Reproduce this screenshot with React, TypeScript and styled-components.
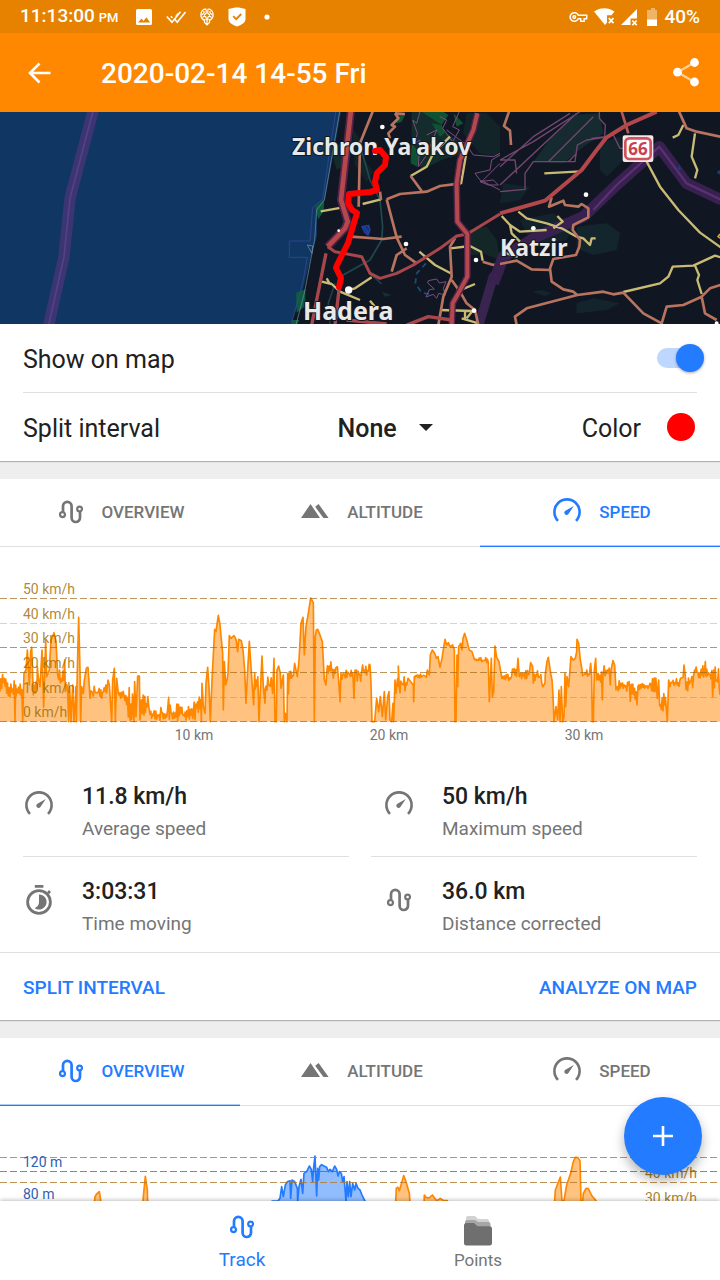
import React from "react";
import styled, { createGlobalStyle, css } from "styled-components";

const color = {
  orange: "#ff8800",
  orangeDark: "#e68200",
  blue: "#237bff",
  text: "#212121",
  muted: "#757575",
  line: "#e0e0e0",
  page: "#eeeeee",
};

const GlobalStyle = createGlobalStyle`
  *, *::before, *::after { box-sizing: border-box; }
  html, body, #root { height: 100%; }
  body {
    margin: 0;
    background: ${color.page};
    color: ${color.text};
    font-family: Roboto, "Liberation Sans", sans-serif;
  }
  button, select, input { font: inherit; color: inherit; }
  svg { display: block; flex: none; }
`;

/* ---------- layout ---------- */

const Screen = styled.div`
  display: flex;
  flex-direction: column;
  height: 100vh;
  background: ${color.page};
`;

const StatusBar = styled.div`
  display: flex;
  justify-content: space-between;
  align-items: center;
  flex: none;
  height: 33px;
  padding: 1px 20px 0 20px;
  background: ${color.orangeDark};
  color: #fff;
  font-size: 19px;
  font-weight: 500;
  line-height: 32px;
`;

const StatusGroup = styled.div<{ $gap: number }>`
  display: flex;
  align-items: center;
  gap: ${(p) => p.$gap}px;
`;

const Clock = styled.time`
  margin-right: 4px;
`;

const Meridiem = styled.span`
  margin-left: 4px;
  font-size: 13px;
`;

const AppBar = styled.header`
  display: flex;
  align-items: center;
  flex: none;
  height: 79px;
  padding: 0 20px 0 27px;
  background: ${color.orange};
  color: #fff;
`;

const IconButton = styled.button`
  display: flex;
  padding: 0;
  border: 0;
  background: none;
  cursor: pointer;
`;

const Title = styled.h1`
  flex: 1;
  margin: 0 0 0 50px;
  padding-top: 2px;
  font-size: 28px;
  font-weight: 500;
  line-height: 34px;
`;

const Body = styled.div`
  position: relative;
  flex: 1;
  min-height: 0;
  display: flex;
  flex-direction: column;
`;

const Scroll = styled.main`
  flex: 1;
  min-height: 0;
  display: flex;
  flex-direction: column;
  overflow-y: auto;
  scrollbar-width: none;
`;

const MapArt = styled.svg`
  width: 100%;
  height: 212px;
`;

const Card = styled.section`
  flex: none;
  margin-bottom: 18px;
  background: #fff;
  box-shadow: 0 1px 1px rgba(0, 0, 0, 0.25);
`;

/* ---------- settings ---------- */

const SettingRow = styled.div`
  display: grid;
  grid-template-columns: 7fr 8fr;
  align-items: center;
  height: 68px;
  margin: 0 23px;
  font-size: 25px;
  line-height: 30px;
  & + & {
    height: 69px;
    border-top: 1px solid ${color.line};
  }
`;

const SettingLabel = styled.label`
  padding-top: 3px;
`;

const Spread = styled.div<{ $end?: boolean }>`
  display: flex;
  align-items: center;
  justify-content: ${(p) => (p.$end ? "flex-end" : "space-between")};
`;

const Toggle = styled.input`
  appearance: none;
  display: grid;
  align-items: center;
  width: 47px;
  height: 28px;
  margin: 0 -7px 0 0;
  cursor: pointer;
  &::before {
    content: "";
    grid-area: 1 / 1;
    width: 40px;
    height: 20px;
    border-radius: 10px;
    background: #cccccc;
  }
  &::after {
    content: "";
    grid-area: 1 / 1;
    justify-self: start;
    width: 28px;
    height: 28px;
    border-radius: 50%;
    background: #fafafa;
    box-shadow: 0 1px 3px rgba(0, 0, 0, 0.35);
  }
  &:checked::before { background: #bdd7ff; }
  &:checked::after { justify-self: end; background: ${color.blue}; }
`;

const SelectBox = styled.div`
  display: grid;
  align-items: center;
`;

const Select = styled.select`
  grid-area: 1 / 1;
  appearance: none;
  padding: 3px 35px 0 0;
  border: 0;
  background: none;
  font-weight: 500;
`;

const Caret = styled.svg`
  grid-area: 1 / 1;
  justify-self: end;
  pointer-events: none;
`;

const ColorField = styled.div`
  display: flex;
  align-items: center;
  gap: 26px;
  margin-right: 2px;
`;

const Swatch = styled.button`
  width: 28px;
  height: 28px;
  padding: 0;
  border: 0;
  border-radius: 50%;
  background: #ff0000;
  cursor: pointer;
`;

/* ---------- tabs, chart, stats ---------- */

const Tabs = styled.div`
  display: grid;
  grid-template-columns: repeat(3, 1fr);
  height: 68px;
`;

const Tab = styled.button<{ $active: boolean }>`
  display: flex;
  align-items: center;
  justify-content: center;
  gap: 18px;
  padding: 0 0 2px 4px;
  border: 0;
  border-bottom: 1px solid ${color.line};
  background: none;
  color: ${color.muted};
  font-size: 17px;
  font-weight: 500;
  line-height: 20px;
  cursor: pointer;
  ${(p) =>
    p.$active &&
    css`
      color: ${color.blue};
      border-color: ${color.blue};
      box-shadow: inset 0 -1px 0 #a9ccf8;
    `}
`;

const ChartArt = styled.svg`
  width: 100%;
  height: auto;
  font-size: 14px;
`;

const Stats = styled.div`
  display: grid;
  grid-template-columns: 1fr 1fr;
  border-bottom: 1px solid ${color.line};
`;

const StatCell = styled.div`
  &:nth-child(-n + 2)::after {
    content: "";
    display: block;
    height: 1px;
    margin: -1px 11px 0 23px;
    background: ${color.line};
  }
  &:nth-child(2)::after { margin: -1px 23px 0 11px; }
`;

const Stat = styled.div`
  display: grid;
  grid-template-columns: 32px 1fr;
  column-gap: 27px;
  align-items: center;
  height: 95px;
  margin-left: 23px;
`;

const StatIcon = styled.div`
  display: flex;
  justify-content: center;
  padding-bottom: 10px;
  color: ${color.muted};
`;

const StatText = styled.div`
  padding-top: 7px;
`;

const StatValue = styled.div`
  font-size: 23px;
  font-weight: 500;
  line-height: 32px;
`;

const StatLabel = styled.div`
  color: ${color.muted};
  font-size: 19px;
  line-height: 32px;
`;

const Actions = styled.div`
  display: flex;
  justify-content: space-between;
  align-items: center;
  height: 67px;
  padding: 0 23px;
`;

const TextButton = styled.button`
  padding: 2px 0 0;
  border: 0;
  background: none;
  color: ${color.blue};
  font-size: 19px;
  font-weight: 500;
  line-height: 24px;
  cursor: pointer;
`;

const Fab = styled.button`
  position: absolute;
  right: 18px;
  bottom: 26px;
  display: grid;
  place-items: center;
  width: 78px;
  height: 78px;
  padding: 0;
  border: 0;
  border-radius: 50%;
  background: ${color.blue};
  box-shadow: 0 6px 12px rgba(0, 0, 0, 0.3);
  cursor: pointer;
`;

const BottomNav = styled.nav`
  position: relative;
  display: flex;
  justify-content: center;
  flex: none;
  height: 79px;
  background: #fff;
  box-shadow: 0 -1px 4px rgba(0, 0, 0, 0.25);
`;

const NavItem = styled.a<{ $active?: boolean }>`
  display: flex;
  flex-direction: column;
  align-items: center;
  justify-content: space-between;
  width: 236px;
  padding: 14px 0 8px;
  color: ${(p) => (p.$active ? color.blue : color.muted)};
  font-size: ${(p) => (p.$active ? 19 : 17)}px;
  line-height: 24px;
  text-decoration: none;
`;

/* ---------- icons ---------- */

const RouteIcon = () => (
  <svg width="24" height="24" viewBox="0 0 24 24" fill="none" stroke="currentColor">
    <path d="M4 12.2V6.200a4.300 4.300 0 0 1 8.600 0v11.600a4.200 4.200 0 0 0 8.400 0v-6.200" strokeWidth="2.700" />
    <circle cx="3.500" cy="14.600" r="2.500" strokeWidth="2.200" />
    <circle cx="20.600" cy="9" r="2.400" strokeWidth="2.200" />
  </svg>
);

const MountainIcon = () => (
  <svg width="28" height="20" viewBox="0 0 28 20" fill="currentColor">
    <path d="M0 16 9.5 2 19 16zM14.2 4.8 17.6 2 27.6 16h-5.2z" />
  </svg>
);

const GaugeIcon = () => (
  <svg width="28" height="28" viewBox="0 0 28 28">
    <path d="M5 22.8A12.6 12.6 0 1 1 23 22.8" fill="none" stroke="currentColor" strokeWidth="2.6" />
    <path d="M20.8 8 15.6 15.8a2.3 2.3 0 1 1-3.2-3.1z" fill="currentColor" />
  </svg>
);

const TimerIcon = () => (
  <svg width="28" height="32" viewBox="0 0 28 32">
    <path d="M9.8 1h8.6v2.8H9.8zM22 8.2l2-2.2 2 2-2 2.2z" fill="currentColor" />
    <circle cx="14" cy="18" r="11.4" fill="none" stroke="currentColor" strokeWidth="2.8" />
    <path d="M14 10.4a7.6 7.6 0 1 1-4.4 13.8q4.4-2 4.4-6.200z" fill="currentColor" />
  </svg>
);

const FoldersIcon = () => (
  <svg width="28" height="31" viewBox="0 0 28 31">
    <path d="M2 3a2 2 0 0 1 2-2h7l3 3h9a2 2 0 0 1 2 2v6H2z" fill="#d2d2d2" />
    <path d="M1 7a2 2 0 0 1 2-2h8l3 2h10.500a2 2 0 0 1 2 2v6H1z" fill="#a6a6a6" />
    <path d="M0 10.500a2.500 2.500 0 0 1 2.500-2.500h7.500l3.500 3.200h12a2.500 2.500 0 0 1 2.500 2.500V28a2.500 2.500 0 0 1-2.500 2.500h-23A2.500 2.500 0 0 1 0 28z" fill="#6f6f6f" />
  </svg>
);

const BackIcon = () => (
  <svg width="24" height="24" viewBox="0 0 24 24" fill="none" stroke="#fff" strokeWidth="2.6">
    <path d="M23.500 12H2.500M12.500 2.500 3 12 12.500 21.500" />
  </svg>
);

const ShareIcon = () => (
  <svg width="28" height="30" viewBox="0 0 28 30" fill="#fff">
    <path d="M22.500 4.500 5.500 14.200l17 9.800" fill="none" stroke="#ffcf9a" strokeWidth="2.200" />
    <circle cx="22.500" cy="4.500" r="4.400" />
    <circle cx="5.500" cy="14.200" r="4.400" />
    <circle cx="22.500" cy="24" r="4.400" />
  </svg>
);

const PictureIcon = () => (
  <svg width="16" height="16" viewBox="0 0 16 16">
    <path fillRule="evenodd" fill="#fff" d="M1.500 0h13A1.500 1.500 0 0 1 16 1.500v13a1.500 1.500 0 0 1-1.500 1.500h-13A1.500 1.500 0 0 1 0 14.500v-13A1.500 1.500 0 0 1 1.500 0zM2 13.500h12L10.500 8.300 7.500 12 5.500 9.500z" />
  </svg>
);

const ChecksIcon = () => (
  <svg width="20" height="14" viewBox="0 0 20 14" fill="none" stroke="#fff" strokeWidth="1.600">
    <path d="M.8 6.500 6 12.200 14.500 1.800M4.800 6.200 6.500 8M9 9.500 11.200 12.200 19.500 2M9.800 6.800 12.500 3.200" />
  </svg>
);

const BrainIcon = () => (
  <svg width="14" height="18" viewBox="0 0 14 18" fill="none" stroke="#fff">
    <path d="M6.300 1.200C3.500.8 1 3 .9 6.500S3 11.800 4.800 12.600M7.700 1.200c2.800-.4 5.300 1.800 5.400 5.300s-2.100 5.300-3.900 6.100" strokeWidth="1.300" />
    <path d="M6.200 1.500v4L4 7M7.800 1.500v4L10 7M4 3v2L1.500 7M10 3v2l2.500 2M2.500 9.500 4.500 8l1.700 1.200v3M11.500 9.500l-2-1.500-1.700 1.200v3M4.500 11v3.500L7 17l2.500-2.500V11M7 11v6" strokeWidth="1.200" />
  </svg>
);

const ShieldIcon = () => (
  <svg width="18" height="20" viewBox="0 0 18 20">
    <path d="M9 .5c2.500 0 5.500.7 8.500 1.500v10c0 3-3 5.500-8.500 7.500C3.500 17.500.5 15 .5 12V2C3.500 1.200 6.500.5 9 .5z" fill="#fff" />
    <path d="m5.200 9.200 3 3 5-5.200" fill="none" stroke="#e68200" strokeWidth="1.900" />
  </svg>
);

const DotIcon = () => (
  <svg width="14" height="6" viewBox="0 0 14 6" fill="#fff">
    <circle cx="7" cy="3" r="2.600" />
  </svg>
);

const KeyIcon = () => (
  <svg width="19" height="12" viewBox="0 0 19 12" fill="none" stroke="#fff" strokeWidth="1.500">
    <path d="M9.300 4.200a4.300 4.300 0 1 0 0 3.600h2.400v2.400h3.400V7.800h2.600V4.200z" />
    <circle cx="5.300" cy="6" r="1.300" />
  </svg>
);

const WifiIcon = () => (
  <svg width="21" height="18" viewBox="0 0 21 18">
    <path d="M0 3.500C6-1 14.500-1 20.500 3.500L17.500 7.200H13V14.500L11 17z" fill="#fff" />
    <path d="m14.800 10.200 4.700 4.900M19.500 10.200l-4.700 4.900" stroke="#fff" strokeWidth="1.700" />
  </svg>
);

const SignalIcon = () => (
  <svg width="17" height="17" viewBox="0 0 17 17">
    <path d="M0 16 16 0V9.500H9.500V16z" fill="#fff" />
    <path d="m11.300 11.500 4.400 4.600M15.700 11.500l-4.400 4.600" stroke="#fff" strokeWidth="1.600" />
  </svg>
);

const BatteryIcon = () => (
  <svg width="14" height="18" viewBox="0 0 14 18">
    <path d="M7 0h4v2h2v16H3V2h4V0z" fill="#fff" fillOpacity=".4" />
    <path d="M3 11.500h10V18H3z" fill="#fff" />
  </svg>
);

const PlusIcon = () => (
  <svg width="20" height="20" viewBox="0 0 20 20" stroke="#fff" strokeWidth="2.600">
    <path d="M10 0v20M0 10h20" />
  </svg>
);

/* ---------- charts ---------- */

type Pt = [number, number];
/** A stretch of noisy samples: from x, to x, upper y, lower y. */
type Noise = [number, number, number, number];

const buildSeries = (parts: (Pt | Noise)[]): Pt[] => {
  let seed = 11;
  const rand = () => {
    seed = (seed * 16807) % 2147483647;
    return seed / 2147483647;
  };
  const out: Pt[] = [];
  parts.forEach((part) => {
    if (part.length === 2) {
      out.push(part);
      return;
    }
    const [x0, x1, top, low] = part;
    let odd = false;
    for (let x = x0; x < x1; x += 2.5) {
      const t = rand() * 0.6;
      out.push([x, Math.min(top + (low - top) * (odd ? t : 1 - t), 513)]);
      odd = !odd;
    }
  });
  return out.sort((a, b) => a[0] - b[0]);
};

const toPath = (pts: Pt[]) => "M" + pts.map(([x, y]) => `${x} ${y.toFixed(1)}`).join("L");

const speedSeries = buildSeries([
  [0, 20, 312, 365], [20, 44, 330, 385], [45, 455], [47, 345], [48, 67, 335, 385], [68, 455], [72, 310],
  [78, 300], [82, 240], [88, 345], [92, 245], [95, 232], [100, 375], [104, 345], [106, 112, 330, 370], [112, 290], [115, 325], [120, 350],
  [126, 240], [131, 412], [137, 212], [140, 320], [148, 300], [153, 210], [158, 200], [162, 188], [168, 215], [173, 315],
  [176, 193, 300, 350], [194, 270], [196, 365], [198, 204, 330, 400], [206, 455], [209, 350], [213, 455], [218, 345], [222, 455], [228, 350],
  [229, 455], [232, 300], [236, 142], [240, 300], [242, 455], [245, 350], [250, 370], [253, 330], [259, 295], [264, 292], [268, 350],
  [270, 322, 345, 385], [324, 330], [328, 345], [335, 455], [338, 330], [343, 295], [346, 455], [350, 325], [355, 370],
  [357, 374, 348, 410], [375, 400, 350, 455], [402, 455], [404, 335], [408, 440], [413, 318], [418, 318], [420, 450], [422, 436, 370, 455],
  [436, 450, 375, 455], [450, 504, 408, 455], [506, 382], [508, 580, 402, 455], [580, 604, 370, 455],
  [604, 455], [606, 340], [610, 410], [615, 430], [618, 340], [623, 292], [627, 350], [631, 455], [636, 330], [644, 178], [648, 185], [655, 136], [660, 165], [668, 250],
  [670, 420], [673, 275], [677, 345], [681, 330], [684, 310], [688, 197], [693, 205], [702, 197], [708, 208], [713, 245], [716, 208], [724, 212], [729, 240], [734, 300],
  [738, 400], [742, 320], [748, 214], [753, 290], [757, 350], [761, 405], [764, 310], [766, 776, 315, 360], [777, 455], [781, 360], [786, 258], [790, 350],
  [795, 400], [796, 816, 315, 375], [818, 370], [822, 265], [825, 455], [829, 455], [831, 300], [836, 288], [841, 310], [843, 355], [850, 315], [853, 455], [856, 430], [861, 455], [863, 310],
  [865, 372], [868, 305], [870, 882, 300, 330], [884, 280], [892, 320], [897, 270], [903, 160], [909, 142], [913, 255], [918, 170], [925, 130], [932, 84], [940, 98], [943, 455], [946, 200], [949, 180],
  [953, 178], [960, 195], [967, 215], [973, 330], [978, 345], [980, 1010, 275, 325], [1012, 290], [1016, 330], [1020, 395], [1023, 310], [1026, 1060, 298, 328], [1062, 385], [1065, 300],
  [1067, 1086, 292, 335], [1088, 285], [1090, 1108, 280, 320], [1110, 285], [1113, 340], [1116, 455], [1124, 455], [1130, 385], [1136, 425], [1141, 380], [1147, 440], [1153, 365], [1157, 450],
  [1163, 380], [1167, 365], [1170, 450], [1175, 455], [1179, 400], [1181, 455], [1185, 330], [1188, 370], [1190, 1222, 315, 370], [1195, 288], [1224, 325],
  [1240, 345], [1241, 395], [1243, 320], [1244, 1280, 312, 325], [1282, 300], [1288, 315], [1291, 255], [1297, 240], [1304, 250], [1309, 265], [1314, 260], [1320, 292], [1326, 265], [1331, 232], [1335, 208], [1340, 225],
  [1345, 218], [1350, 230], [1358, 225], [1363, 240], [1365, 455], [1368, 455], [1371, 255], [1373, 350], [1376, 230], [1382, 220], [1386, 240], [1389, 205], [1394, 190], [1400, 210], [1408, 240], [1416, 245], [1423, 268], [1425, 1466, 263, 278],
  [1468, 395], [1474, 265], [1477, 380], [1481, 365], [1485, 228], [1490, 262], [1497, 275], [1503, 310], [1506, 1535, 312, 332], [1535, 1552, 290, 325], [1554, 265], [1558, 320], [1560, 1590, 300, 328], [1592, 278],
  [1598, 290], [1600, 1626, 300, 340], [1628, 350], [1635, 340], [1636, 310], [1641, 275], [1645, 262], [1652, 310], [1656, 330], [1659, 375], [1662, 455], [1668, 410], [1673, 450], [1677, 360],
  [1680, 455], [1684, 350], [1688, 455], [1692, 440], [1695, 310], [1697, 410], [1701, 320], [1706, 350], [1713, 260], [1720, 270], [1726, 265], [1730, 245], [1731, 208], [1736, 220], [1741, 270], [1746, 300],
  [1748, 1770, 295, 325], [1772, 280], [1775, 320], [1777, 455], [1780, 455], [1783, 300], [1787, 265], [1790, 330], [1792, 1806, 295, 345], [1807, 390], [1809, 310], [1810, 1830, 285, 330], [1831, 345],
  [1833, 300], [1839, 272], [1844, 285], [1848, 360], [1850, 1890, 330, 365], [1891, 1912, 340, 405], [1914, 1948, 340, 360], [1950, 1970, 322, 365], [1972, 385], [1976, 330],
  [1979, 2000, 370, 455], [2002, 455], [2006, 330], [2010, 350], [2012, 2040, 325, 350], [2042, 2050, 310, 340], [2052, 285], [2056, 320], [2058, 2082, 310, 365], [2084, 300], [2086, 2114, 285, 325],
  [2116, 275], [2118, 2136, 285, 335], [2138, 380], [2141, 300], [2143, 2160, 290, 365], [2160, 375],
]);

const speedLine = toPath(speedSeries);

const speedGrid = [
  { y: 51, label: "50 km/h", strong: true },
  { y: 76, label: "40 km/h", strong: false },
  { y: 100, label: "30 km/h", strong: true },
  { y: 125, label: "20 km/h", strong: true },
  { y: 150, label: "10 km/h", strong: false },
  { y: 174, label: "0 km/h", strong: true },
];

const SpeedChart = () => (
  <ChartArt viewBox="0 0 720 215" role="img" aria-label="Speed over distance">
    <g transform="translate(0 23) scale(.33333)">
      <path d={`${speedLine}V455H0Z`} fill={color.orange} fillOpacity=".5" />
      <path d={speedLine} fill="none" stroke={color.orange} strokeWidth="5" strokeLinejoin="round" />
    </g>
    {speedGrid.map((g) => (
      <React.Fragment key={g.label}>
        <path
          d={`M0 ${g.y}.5H720`}
          stroke="#a06a14"
          strokeOpacity={g.strong ? 0.7 : 0.3}
          strokeDasharray="7 3"
        />
        <text x="23" y={g.y - 4} fill="#9a6a00" fillOpacity=".8">{g.label}</text>
      </React.Fragment>
    ))}
    {["10 km", "20 km", "30 km"].map((label, i) => (
      <text key={label} x={194 + i * 195} y="193" fill={color.muted} textAnchor="middle">{label}</text>
    ))}
  </ChartArt>
);

const hill = toPath(
  buildSeries([
    [816, 513], [834, 513], [840, 505], [845, 470], [850, 500], [856, 465], [862, 455], [870, 452], [872, 505], [876, 450], [884, 455],
    [892, 475], [893, 513], [897, 470], [903, 448], [908, 490], [912, 430], [920, 425], [928, 408], [934, 418], [938, 455], [941, 412], [945, 378],
    [950, 498], [953, 415], [956, 450], [959, 410], [965, 404], [972, 408], [980, 412], [985, 425], [990, 418], [997, 425], [1004, 408], [1010, 418],
    [1014, 438], [1018, 425], [1024, 430], [1028, 455], [1032, 440], [1038, 513], [1041, 455], [1045, 500], [1049, 455], [1053, 500], [1058, 460], [1064, 480],
    [1068, 460], [1074, 475], [1080, 480], [1086, 495], [1095, 513], [1130, 650],
  ]),
);

const peaks = [
  "M270 650 285 500 290 492 298 485 302 510 310 650",
  "M420 650 430 500 436 439 442 480 446 650",
  "M1180 650 1189 475 1194 472 1198 482 1206 455 1211 437 1218 455 1228 490 1240 650",
  "M1268 650 1273 495 1278 502 1287 504 1297 495 1310 512 1321 505 1330 511 1342 512 1360 650",
  "M1655 650 1666 480 1673 462 1681 441 1686 513 1692 512 1700 465 1712 430 1720 395 1726 382 1734 383 1740 393 1743 513 1748 513 1750 490 1758 475 1765 476 1776 498 1788 512 1810 650",
];

const OverviewChart = () => (
  <ChartArt viewBox="0 0 720 190" role="img" aria-label="Altitude and speed over distance">
    <g transform="translate(0 -76) scale(.33333)" strokeWidth="5" strokeLinejoin="round">
      {peaks.map((d) => (
        <path key={d} d={d} fill={color.orange} fillOpacity=".5" stroke={color.orange} />
      ))}
      <path d={`${hill}V750H790Z`} fill={color.blue} fillOpacity=".5" stroke={color.blue} />
    </g>
    <path d="M0 51.5H720M0 76.5H720" stroke="#b0792c" strokeOpacity=".8" strokeDasharray="7 3" />
    <path d="M0 65.5H720" stroke="#3d66ad" strokeOpacity=".75" strokeDasharray="7 3" />
    <g fill="#2f5fb5">
      <text x="23" y="61">120 m</text>
      <text x="23" y="93">80 m</text>
    </g>
    <g fill="#9a6a00" fillOpacity=".85" textAnchor="end">
      <text x="697" y="72">40 km/h</text>
      <text x="697" y="97">30 km/h</text>
    </g>
  </ChartArt>
);

/* ---------- map ---------- */

const RouteMap = () => (
  <MapArt viewBox="0 0 720 212" preserveAspectRatio="xMidYMid slice" role="img" aria-label="Map of the recorded track">
    <rect width="720" height="212" fill="#101723" />
    <path d="M0 0H341L325 87 317 96V124L312 140 302 182 291 212H0Z" fill="#103763" />
    <g transform="translate(0 -2) scale(.33333)" fill="none">
      <path d="M280 0 210 265 192 440 145 650" stroke="#3b3673" strokeWidth="34" />
      <path d="M280 0 210 265 192 440 145 650" stroke="#554184" strokeWidth="5" />
    </g>

    <g transform="translate(280 -2) scale(.33333)" fill="none" strokeLinejoin="round">
      <g fill="#15322d">
        <path d="M395 0h90l-10 60 60 30 20 40-70 20-60 30-30-90z" opacity=".8" />
        <path d="M560 10h60l40 40v90l-60-10-50-60z" opacity=".5" />
        <path d="M150 110l40-10 10 60-30 20z" opacity=".8" />
        <path d="M215 50l40 60-10 30 35 45-20 30-35-50z" opacity=".5" />
        <path d="M560 360l60-10 30 40 10 60-50-20-60 10z" opacity=".6" />
        <path d="M305 545l30 10-20 5z" />
      </g>
      <path d="M425 5l60 40 20-30-15-10zM520 10l30 30-20 10zM395 100l25 30-8 40-20-10zM455 40l25 40 15-10-10-25zM350 10l25 5-10 20-15 5z" fill="#0f5232" />
      <path d="M105 290l28-22-2 35-16 25zM48 548l28-10 0 50-26 20zM36 630h22l-8 15H35z" fill="#0e5a3c" />
      <path d="M168 0 148 130 128 268 98 292 90 393H28v49h54L68 520 33 645" stroke="#3c4b9c" strokeWidth="2" />
      <path d="M180 0 133 270 110 300 104 390 94 440 74 545 48 645" stroke="#6f95ab" strokeWidth="2" />
      <path d="M82 405l14 25 2-22z" stroke="#7d9ab0" strokeWidth="2" />
      <path d="M240 105 270 210 300 270 308 350 305 390 270 450 180 500" stroke="#1f4a4d" strokeWidth="5" />
      <path d="M270 490 305 522M165 520l-20 60 5 65" stroke="#1c4146" strokeWidth="5" />
      <path d="M438 460 410 490 406 520 425 548 460 555" stroke="#1d4d77" strokeWidth="5" strokeDasharray="16 12" />
      <path d="M246 350l20-4 4 14-6 15-10-8zM252 350l14 20" stroke="#2342a8" strokeWidth="4" fill="#1b2e7c" />
      <g stroke="#7a4d80" strokeWidth="3">
        <path d="M420 5 410 40 398 30 412 70 405 100 420 90 415 170 440 135 470 60 440 75M480 20l20 10-12 25 30 40 20-35-20-10 22-50M500 60l60 45 20 30 60 5 20-10" />
        <path d="M660 135 635 150 630 180 585 190 600 210 660 240M600 215l40-5 15 15-30 0zM660 160 605 215" />
        <path d="M445 512l25-5 8 12 20-4-8 20 6 20-20-5-6 15-10-12-22 8 10-22 15-2-20-18z" />
      </g>
      <path d="M662 480 640 500 610 600 595 650" stroke="#38244f" strokeWidth="28" />
      <g stroke="#c9bb74" strokeWidth="7">
        <path d="M122 304 185 293M248 282 303 268M510 80 460 130 440 170 392 198M558 135 543 222M418 425 465 465 512 490" />
        <path d="M512 415 570 408 603 425 608 452M125 515 155 522 180 545 240 570M150 522 140 505M275 502 225 535 205 540M270 572 285 590M480 600 580 603M545 625 595 640M530 545 585 522M580 600 560 625M555 600v30" />
      </g>
      <g stroke="#b8745f" strokeWidth="8">
        <path d="M278 5 240 100 236 290M345 10 355 25 335 45 345 50 325 70 330 85M300 245 303 270M320 268 350 382 375 435 410 460M320 268 360 252 440 245 480 228 543 220M425 243 392 198M213 380 310 387 365 380M380 415 350 435 335 485" />
        <path d="M525 385 510 410 515 500 490 560 475 645M515 510 540 545 560 580 585 600 595 645M608 455 640 465 662 460M345 10 375 12" />
      </g>
      <path d="M213 0 183 270 203 335 195 355 143 410" stroke="#54224a" strokeWidth="24" />
      <path d="M213 0 183 270 203 335 195 355 143 410" stroke="#b4484b" strokeWidth="14" />
      <path d="M143 410 165 425 245 440 270 490 300 505 350 490 400 465 480 415 530 378 562 372 660 312" stroke="#a8474b" strokeWidth="9" />
      <path d="M592 10 580 60 540 150 530 220 532 335 562 372 562 500 535 550 518 580 515 645" stroke="#54224a" strokeWidth="20" />
      <path d="M592 10 580 60 540 150 530 220 532 335 562 372 562 500 535 550 518 580 515 645" stroke="#b4484b" strokeWidth="12" />
      <path d="M138 430 95 645M178 530 165 645M380 645 445 620 515 630M200 630l120 12" stroke="#a8474b" strokeWidth="10" />
      <g fill="#fff">
        <circle cx="307" cy="51" r="7" />
        <circle cx="378" cy="402" r="7" />
        <circle cx="588" cy="450" r="7" />
        <circle cx="206" cy="540" r="11" />
        <circle cx="582" cy="602" r="7" />
        <circle cx="176" cy="362" r="4" />
      </g>
    </g>

    <g transform="translate(500 -2) scale(.33333)" fill="none" strokeLinejoin="round">
      <g fill="#152b30">
        <path d="M100 155l60-80 60-60 80-5 10 60-60 40-60 50z" />
        <path d="M300 100l60-20 20 60-60 60-20-20z" opacity=".7" />
        <path d="M230 350l90-10 40 30-10 50-70 15-50-20z" opacity=".8" />
        <path d="M10 220l80 10-30 40-60 10zM60 330l100-20 60 40-20 40-100 20z" opacity=".6" />
        <path d="M95 545l30-5 30 10-20 8zM230 580l50-15 80 15-40 20-90 10z" opacity=".7" />
      </g>
      <path d="M-20 520 10 440 110 380 250 320 350 225 478 110 560 220 665 270" stroke="#38204f" strokeWidth="34" />
      <path d="M280 300 350 225 478 110 560 220 665 270" stroke="#5a3173" strokeWidth="7" />
      <g stroke="#74466f" strokeWidth="4">
        <path d="M0 150 100 95 240 5M0 170 100 80 210 10M0 225 230 10M145 155 280 20M0 245 75 238V190L100 155H225L232 105 260 90 315 82M298 5v20l18 20-2 35-40 5M0 150l45 0 5 40M205 155 230 130M340 75l20 40h20" />
      </g>
      <path d="M530 180l8-15 6 15z" stroke="#1d3b78" fill="#1d3b78" />
      <circle cx="658" cy="187" r="6" fill="#1d3b78" />
      <g stroke="#c9bb74" strokeWidth="7">
        <path d="M133 190 242 184M440 155 480 230 535 300 600 368 662 412M585 70 575 140 592 180 585 205M550 45 535 75 518 83" />
        <path d="M5 318 30 345 60 365 140 360M55 305 80 325 140 340 185 355 230 380M30 345 35 370 60 395M160 355 188 335 172 318M230 380 250 385 270 405 275 385 287 385M65 415 50 440 5 425M370 546 480 520 505 500 518 470 580 467 645 437 662 442M585 467 597 495 592 510 605 552" />
      </g>
      <g stroke="#b8745f" strokeWidth="8">
        <path d="M27 5 12 48 30 62 33 105M535 0 560 55 590 65 662 80M155 262 147 290 190 272 195 285 235 290 245 282 265 295V322L220 345 218 360 240 390 238 410 228 435 160 447 150 475 155 515 190 538 220 545 232 555 310 545 340 553 370 548M0 462 50 452 95 478 150 480M232 555 80 595 45 620 50 645M370 548 430 610 485 640 500 590 550 585 605 560 630 535 662 525M605 560 615 610 650 630" />
        <path d="M365 5 385 70" stroke="#b25a55" />
      </g>
      <path d="M0 310 135 272 245 180 290 120 320 82 380 45 470 5" stroke="#b3484c" strokeWidth="12" />
      <path d="M660 372l-6 8 6 4" stroke="#d9a820" strokeWidth="5" />
      <g fill="#fff">
        <circle cx="258" cy="254" r="7" />
        <circle cx="100" cy="355" r="7" />
        <circle cx="650" cy="640" r="6" />
      </g>
      <rect x="368" y="76" width="92" height="80" rx="6" fill="#f3e9ea" />
      <rect x="376" y="85" width="76" height="62" rx="12" fill="#fff" stroke="#d2535d" strokeWidth="8" />
    </g>
    <g
      fontFamily='"Noto Sans", "Open Sans", sans-serif'
      fontWeight="700"
      fill="#e9e9e9"
      stroke="#15171c"
      strokeWidth="2"
      strokeLinejoin="round"
      paintOrder="stroke"
    >
      <text x="292" y="43" fontSize="23">Zichron Ya'akov</text>
      <text x="500" y="144" fontSize="23">Katzir</text>
      <text x="303" y="208" fontSize="25">Hadera</text>
      <text x="638" y="43" fontSize="17" fill="#c9414f" stroke="none" textAnchor="middle">66</text>
    </g>
    <path
      d="M375 39 380 38 386 45 385 53 377 61 375 70 377 78 370 80 349 82 348 91 352 98 357 101 348 131 337 153 336 156 341 166 339 175"
      fill="none"
      stroke="#ff0000"
      strokeWidth="6"
      strokeLinecap="round"
      strokeLinejoin="round"
    />
  </MapArt>
);

/* ---------- shared parts ---------- */

const tabItems = [
  { name: "OVERVIEW", icon: <RouteIcon /> },
  { name: "ALTITUDE", icon: <MountainIcon /> },
  { name: "SPEED", icon: <GaugeIcon /> },
];

const TabStrip = ({ active }: { active: string }) => (
  <Tabs role="tablist">
    {tabItems.map((t) => (
      <Tab key={t.name} type="button" role="tab" aria-selected={t.name === active} $active={t.name === active}>
        {t.icon}
        {t.name}
      </Tab>
    ))}
  </Tabs>
);

const stats = [
  { value: "11.8 km/h", label: "Average speed", icon: <GaugeIcon /> },
  { value: "50 km/h", label: "Maximum speed", icon: <GaugeIcon /> },
  { value: "3:03:31", label: "Time moving", icon: <TimerIcon /> },
  { value: "36.0 km", label: "Distance corrected", icon: <RouteIcon /> },
];

export default function App() {
  return (
    <Screen>
      <GlobalStyle />
      <StatusBar>
        <StatusGroup $gap={14}>
          <Clock>
            11:13:00<Meridiem>PM</Meridiem>
          </Clock>
          <PictureIcon />
          <ChecksIcon />
          <BrainIcon />
          <ShieldIcon />
          <DotIcon />
        </StatusGroup>
        <StatusGroup $gap={6}>
          <KeyIcon />
          <WifiIcon />
          <SignalIcon />
          <BatteryIcon />
          <span>40%</span>
        </StatusGroup>
      </StatusBar>
      <AppBar>
        <IconButton type="button" aria-label="Back">
          <BackIcon />
        </IconButton>
        <Title>2020-02-14 14-55 Fri</Title>
        <IconButton type="button" aria-label="Share">
          <ShareIcon />
        </IconButton>
      </AppBar>
      <Body>
        <Scroll>
          <RouteMap />
          <Card>
            <SettingRow>
              <SettingLabel htmlFor="show-on-map">Show on map</SettingLabel>
              <Spread $end>
                <Toggle id="show-on-map" type="checkbox" role="switch" defaultChecked />
              </Spread>
            </SettingRow>
            <SettingRow>
              <SettingLabel htmlFor="split-interval">Split interval</SettingLabel>
              <Spread>
                <SelectBox>
                  <Select id="split-interval" defaultValue="None">
                    <option>None</option>
                  </Select>
                  <Caret width="14" height="7" viewBox="0 0 14 7">
                    <path d="M0 0h14L7 7z" fill={color.text} />
                  </Caret>
                </SelectBox>
                <ColorField>
                  <SettingLabel htmlFor="track-color">Color</SettingLabel>
                  <Swatch id="track-color" type="button" aria-label="Color" />
                </ColorField>
              </Spread>
            </SettingRow>
          </Card>
          <Card>
            <TabStrip active="SPEED" />
            <SpeedChart />
            <Stats>
              {stats.map((s) => (
                <StatCell key={s.label}>
                  <Stat>
                    <StatIcon>{s.icon}</StatIcon>
                    <StatText>
                      <StatValue>{s.value}</StatValue>
                      <StatLabel>{s.label}</StatLabel>
                    </StatText>
                  </Stat>
                </StatCell>
              ))}
            </Stats>
            <Actions>
              <TextButton type="button">SPLIT INTERVAL</TextButton>
              <TextButton type="button">ANALYZE ON MAP</TextButton>
            </Actions>
          </Card>
          <Card>
            <TabStrip active="OVERVIEW" />
            <OverviewChart />
          </Card>
        </Scroll>
        <Fab type="button" aria-label="Add">
          <PlusIcon />
        </Fab>
      </Body>
      <BottomNav>
        <NavItem href="#track" $active>
          <RouteIcon />
          Track
        </NavItem>
        <NavItem href="#points">
          <FoldersIcon />
          Points
        </NavItem>
      </BottomNav>
    </Screen>
  );
}
